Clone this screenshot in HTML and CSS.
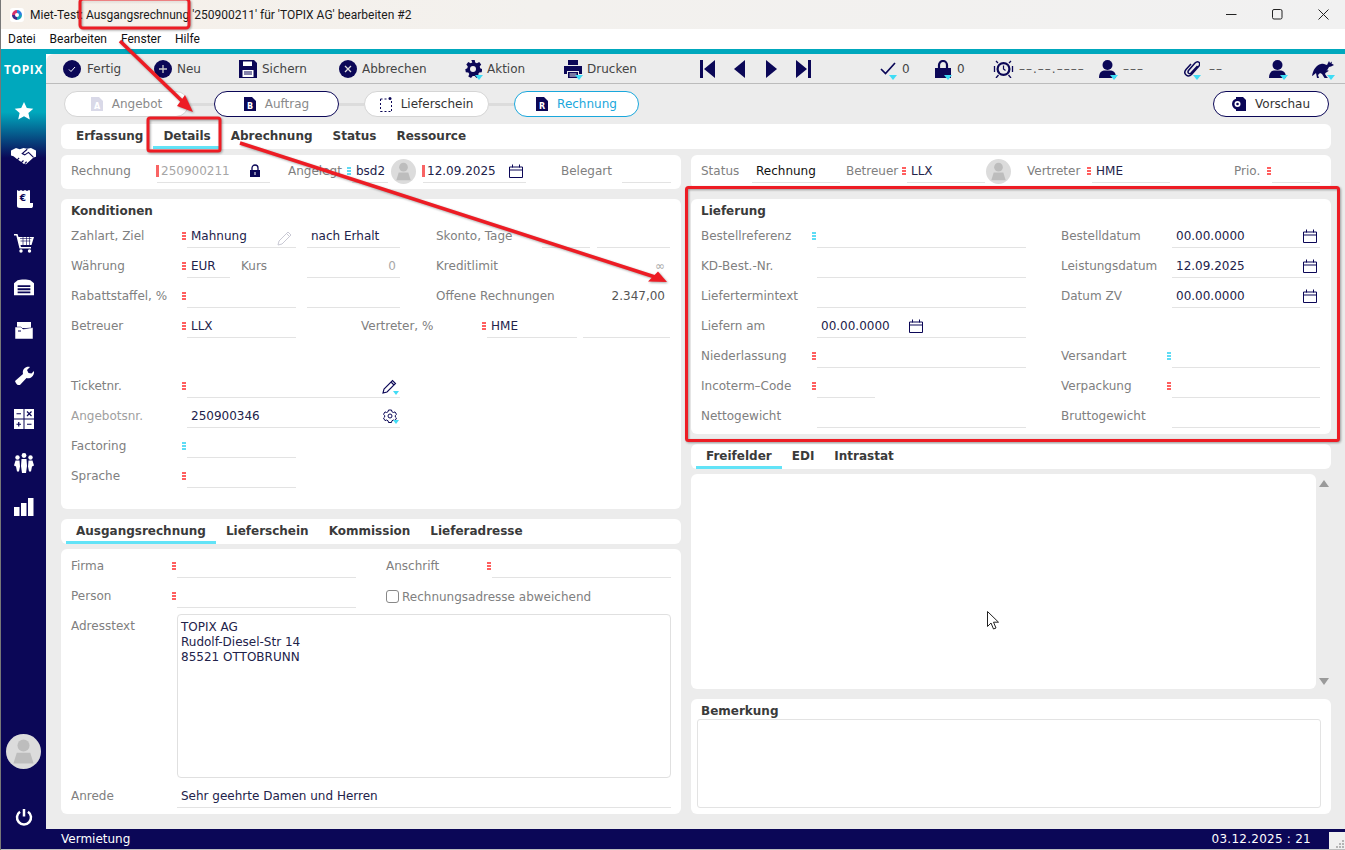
FILE: index.html
```html
<!DOCTYPE html>
<html lang="de">
<head>
<meta charset="utf-8">
<title>TOPIX</title>
<link rel="stylesheet" href="styles.css">
</head>
<body>
<svg class="defs" width="0" height="0">
  <symbol id="i-cal" viewBox="0 0 14 14"><path d="M.5 3h13v10.500H.5zM.5 6h13M3.500.5v3M10.500.500v3" fill="none" stroke="#0b0757"/></symbol>
  <symbol id="i-person" viewBox="0 0 18 18"><circle cx="8.500" cy="5" r="5" fill="#0b0757"/><path d="M0 18c0-5 2-7 5-7.500h7c3 .5 5 2.500 5 7.500z" fill="#0b0757"/></symbol>
  <symbol id="i-avatar" viewBox="0 0 26 26"><circle cx="13" cy="13" r="13" fill="#dcdcdc"/><circle cx="13" cy="8.500" r="4.500" fill="#bdbdbd"/><path d="M8 14h10l2.500 8h-15z" fill="#bdbdbd"/></symbol>
</svg>

<div class="app">
  <header class="title">
    <svg class="t-logo" viewBox="0 0 14 14" width="14" height="14"><rect width="14" height="14" rx="3" fill="#fff"/><path d="M7 2a5 5 0 0 0-5 5h3a2 2 0 0 1 2-2z" fill="#d6336c"/><path d="M7 2a5 5 0 0 1 5 5H9a2 2 0 0 0-2-2z" fill="#2b7de0"/><path d="M12 7a5 5 0 0 1-5 5V9a2 2 0 0 0 2-2z" fill="#17a2b8"/><path d="M7 12a5 5 0 0 1-5-5h3a2 2 0 0 0 2 2z" fill="#3a2b8c"/></svg>
    <span class="t-text">Miet-Test: Ausgangsrechnung '250900211' für 'TOPIX AG' bearbeiten #2</span>
    <div class="winctl">
      <svg width="11" height="11" viewBox="0 0 11 11"><path d="M0 5.500h10.500" stroke="#222"/></svg>
      <svg width="11" height="11" viewBox="0 0 11 11"><rect x=".5" y=".5" width="9.500" height="9.500" rx="1.500" fill="none" stroke="#222"/></svg>
      <svg width="11" height="11" viewBox="0 0 11 11"><path d="M.5.500l10 10M10.500.500l-10 10" stroke="#222"/></svg>
    </div>
  </header>
  <nav class="menu"><span>Datei</span><span>Bearbeiten</span><span>Fenster</span><span>Hilfe</span></nav>
  <div class="teal"></div>

  <div class="body">
    <aside class="side">
      <div class="brand">TOPIX</div>
      <ul class="side-icons">
        <li><svg viewBox="0 0 20 20"><path d="M10 1l2.800 6 6.500.7-4.900 4.400 1.400 6.400L10 15.200 4.200 18.500l1.400-6.400L.7 7.700 7.200 7z" fill="#fff"/></svg></li>
        <li><svg class="wide" viewBox="0 0 20 20"><path d="M0 6l4-2 3 1 3-1 3 .5 3-.5 4 2v5l-2 .5-6 5.500-2-.5-2-1.500-3-2-3-2.500-2-.5z" fill="#fff"/><path d="M13 5L9 8.500l2 1 3-2 4 4M8 16l2-2M11 16.500l1.500-1.500M5 13.500l1.500-1.500" fill="none" stroke="#0b0757" stroke-width=".9"/></svg></li>
        <li><svg viewBox="0 0 20 20"><path d="M3 1l2 1 2-1 2 1 2-1 2 1 2-1 1 .5V14h3v3c0 1.500-1 2-2 2H6c-2 0-3-1-3-2z" fill="#fff"/><text x="9" y="11.500" class="eur">€</text></svg></li>
        <li><svg viewBox="0 0 20 20"><path d="M0 1h3.500l1 3H20l-2.500 8H6.500l.5 2h10v1.500H5.500L2.300 2.500H0z" fill="#fff"/><path d="M6 5.500h11.500M6.500 8h10M9 4v8M12.500 4v8M15.500 4v8" stroke="#0b0757" stroke-width=".6"/><circle cx="7" cy="18" r="1.700" fill="#fff"/><circle cx="15.500" cy="18" r="1.700" fill="#fff"/></svg></li>
        <li><svg viewBox="0 0 22 18"><path d="M0 18V5l4-3.500C7 .5 15 .5 18 1.500L22 5v13z" fill="#fff"/><path d="M4 7h14v2H4zM4 10.500h14v2H4zM4 14h14v2H4z" fill="#0b0757"/></svg></li>
        <li><svg viewBox="0 0 20 20"><path d="M3 1h14v6H3z" fill="#fff"/><path d="M1 6h6l2 2 10-1.500V18H1z" fill="#fff" stroke="#0b0757" stroke-width=".5"/><path d="M4 10h3" stroke="#0b0757"/></svg></li>
        <li><svg viewBox="0 0 20 20"><path d="M1 16l8-7c-1-4 2-8 7-7l-3 3 1.500 3 3 .5 2.500-2.500c.5 5-3.500 8-7.500 7l-7 7.500c-1.500.5-4-2.500-4.500-4.500z" fill="#fff"/></svg></li>
        <li><svg viewBox="0 0 20 20"><path d="M0 0h9.500v9.500H0zM10.500 0H20v9.500h-9.500zM0 10.500h9.500V20H0zM10.500 10.500H20V20h-9.500z" fill="#fff"/><path d="M2.500 4.750h4.500M13 2.500l4.500 4.500M17.500 2.500L13 7M2.500 15.250h4.500M4.750 13v4.500M13 15.250h4.500" stroke="#0b0757" stroke-width="1.200"/></svg></li>
        <li><svg viewBox="0 0 20 20"><circle cx="10" cy="2.500" r="2.400" fill="#fff"/><circle cx="3.500" cy="4.500" r="2.200" fill="#fff"/><circle cx="16.500" cy="4.500" r="2.200" fill="#fff"/><path d="M7.500 6h5l.5 7-1 7H8l-1-7zM1.500 7.500h4l.5 6-1 5H3l-1-5-2-1zM14.500 7.500h4l1.500 5-2 1-1 5h-2l-1-5z" fill="#fff"/></svg></li>
        <li><svg viewBox="0 0 20 20"><path d="M0 10h5.500v9H0zM7 6h5.500v13H7zM14 1h5.500v18H14z" fill="#fff"/></svg></li>
      </ul>
      <div class="side-foot">
        <svg class="side-avatar" width="35" height="35"><use href="#i-avatar"/></svg>
        <svg class="power" viewBox="0 0 18 18" width="18" height="18"><path d="M5 3.800a7 7 0 1 0 8 0" fill="none" stroke="#fff" stroke-width="2.500"/><path d="M9 1v7.500" stroke="#fff" stroke-width="2.500"/></svg>
      </div>
    </aside>

    <main class="main">
      <div class="toolbar">
        <div class="tb w91"><svg class="ico" viewBox="0 0 18 18" width="18" height="18"><circle cx="9" cy="9" r="9" fill="#0b0757"/><path d="M6 9.500l2 2 4-4.500" fill="none" stroke="#fff"/></svg><span class="s6">Fertig</span></div>
        <div class="tb w85"><svg class="ico" viewBox="0 0 18 18" width="18" height="18"><circle cx="9" cy="9" r="9" fill="#0b0757"/><path d="M5 9h8M9 5v8" stroke="#ccc" stroke-width="1.300"/></svg><span class="s5">Neu</span></div>
        <div class="tb w100"><svg class="ico" viewBox="0 0 18 18" width="18" height="18"><path d="M0 0h15l3 3v15H0z" fill="#0b0757"/><path d="M4 1.500h9v4.500H4zM3.500 10h11v7h-11z" fill="#fff"/><path d="M5 12h8M5 14h8" stroke="#0b0757"/></svg><span class="s5">Sichern</span></div>
        <div class="tb w125"><svg class="ico" viewBox="0 0 18 18" width="18" height="18"><circle cx="9" cy="9" r="9" fill="#0b0757"/><path d="M6 6l6 6M12 6l-6 6" stroke="#ddd" stroke-width="1.300"/></svg><span class="s5">Abbrechen</span></div>
        <div class="tb w100"><span class="drop"><svg class="ico" viewBox="0 0 18 18" width="18" height="18"><path d="M7.300 0h3.400l.5 2.500 1.700.8 2.300-1.200 2 2.400-1.500 2 .5 1.700 2 1-.5 3-2.500.3-1 1.600 1 2.300-2.700 1.500-1.800-1.800h-2l-1.700 1.800-2.700-1.500 1-2.300-1-1.600-2.500-.3-.5-3 2-1 .5-1.700-1.500-2 2-2.400 2.300 1.200 1.700-.8z" fill="#0b0757"/><circle cx="9" cy="9" r="3" fill="#ececec"/></svg><i class="tri"></i></span><span class="s5">Aktion</span></div>
        <div class="tb w136"><span class="drop"><svg class="ico" viewBox="0 0 18 18" width="18" height="18"><path d="M4 0h10v5H4zM0 6h18v8h-3v-3H3v3H0zM4 12h10v6H4z" fill="#0b0757"/><path d="M5.500 14h7M5.500 16h7" stroke="#ececec"/></svg><i class="tri"></i></span><span class="s5">Drucken</span></div>
        <div class="tb w34"><svg viewBox="0 0 15 18" width="15" height="18"><path d="M0 0h3v18H0zM15 0v18L4 9z" fill="#0b0757"/></svg></div>
        <div class="tb w32"><svg viewBox="0 0 11 18" width="11" height="18"><path d="M11 0v18L0 9z" fill="#0b0757"/></svg></div>
        <div class="tb w30"><svg viewBox="0 0 11 18" width="11" height="18"><path d="M0 0v18l11-9z" fill="#0b0757"/></svg></div>
        <div class="tb w84"><svg viewBox="0 0 15 18" width="15" height="18"><path d="M12 0h3v18h-3zM0 0v18l11-9z" fill="#0b0757"/></svg></div>
        <div class="tb w55"><span class="drop"><svg viewBox="0 0 16 18" width="16" height="18"><path d="M1 9l4.500 4.500L15 3" fill="none" stroke="#0b0757" stroke-width="1.700"/></svg><i class="tri"></i></span><span class="s6">0</span></div>
        <div class="tb w58"><span class="drop"><svg viewBox="0 0 16 18" width="16" height="18"><path d="M4 8V5a4 4 0 0 1 8 0v3" fill="none" stroke="#0b0757" stroke-width="2.200"/><path d="M0 8h16v10H0z" fill="#0b0757"/></svg><i class="tri"></i></span><span class="s6">0</span></div>
        <div class="tb w106"><svg viewBox="0 0 21 18" width="21" height="18"><circle cx="10.500" cy="9" r="7" fill="#0b0757"/><circle cx="10.500" cy="9" r="4.800" fill="#ececec"/><path d="M10.500 5.500V9l2 1.500" fill="none" stroke="#0b0757" stroke-width="1.200"/><path d="M5 3L3 1M16 3l2-2M5.500 15L3 18M15.500 15l2.500 3M1.500 6v6M19.500 6v6" stroke="#0b0757" stroke-width="1.300"/></svg><span class="s5 dim">––.––.––––</span></div>
        <div class="tb w85"><span class="drop"><svg width="18" height="18"><use href="#i-person"/></svg><i class="tri"></i></span><span class="s6 dim">–––</span></div>
        <div class="tb w85"><span class="drop"><svg viewBox="0 0 16 18" width="16" height="18"><path d="M13.500 6L7 13c-1.500 1.500-4 0-2.500-2.500L11 3c3-3 6 0 4 3l-7.500 8.500C4 18 -1.500 14 2 9.500L7 4" fill="none" stroke="#0b0757" stroke-width="1.500"/></svg><i class="tri"></i></span><span class="s7 dim">––</span></div>
        <div class="tb w43"><span class="drop"><svg width="18" height="18"><use href="#i-person"/></svg><i class="tri"></i></span></div>
        <div class="tb"><span class="drop"><svg viewBox="0 0 22 18" width="22" height="18"><path d="M0 16C1 10 4 5 9 4c3-1 5 1 6 1l2-4 1 2 2-1.500-.5 2L22 5l-3 1.500-2 .5c-1 2-2 3-2.500 4l1.500-1 .5 1-3 2-.5 1 2 3 1 1h-3.500L10 14l-2-1-2 2 1 3H5l-1-5-3 2.500z" fill="#0b0757"/></svg><i class="tri"></i></span></div>
      </div>

      <div class="pipeline">
        <div class="pill"><svg class="doc" viewBox="0 0 12 14" width="12" height="14"><path d="M0 0h8l4 4v10H0z" fill="#d9d9e8"/><text x="6" y="12" class="doc-l light">A</text></svg><span class="p-dim">Angebot</span></div>
        <i class="conn"></i>
        <div class="pill navy"><svg class="doc" viewBox="0 0 12 14" width="12" height="14"><path d="M0 0h8l4 4v10H0z" fill="#0b0757"/><text x="6" y="12" class="doc-l">B</text></svg><span class="p-dim">Auftrag</span></div>
        <i class="conn"></i>
        <div class="pill"><svg class="doc" viewBox="0 0 12 15" width="12" height="15"><path d="M.5 2h7M.5 14.500h11M.5 2v12.500M11.500 4v10.500" fill="none" stroke="#0b0757" stroke-dasharray="2 2"/><circle cx="10" cy="1.500" r="1.500" fill="#0b0757"/></svg><span>Lieferschein</span></div>
        <i class="conn"></i>
        <div class="pill blue"><svg class="doc" viewBox="0 0 12 14" width="12" height="14"><path d="M0 0h8l4 4v10H0z" fill="#0b0757"/><text x="6" y="12" class="doc-l">R</text></svg><span>Rechnung</span></div>
        <div class="pill navy preview"><svg class="doc" viewBox="0 0 14 14" width="14" height="14"><path d="M4 0h7l3 3v11H4z" fill="#0b0757"/><circle cx="5.500" cy="7" r="5.500" fill="#0b0757"/><circle cx="5.500" cy="7" r="3" fill="#fff"/><circle cx="5.500" cy="7" r="1.300" fill="#0b0757"/></svg><span>Vorschau</span></div>
      </div>

      <div class="tabs top">
        <span class="tab">Erfassung</span><span class="tab on">Details</span><span class="tab">Abrechnung</span><span class="tab">Status</span><span class="tab">Ressource</span>
      </div>

      <div class="cols">
        <div class="col">
          <section class="panel head">
            <div class="row">
              <label class="lbl w85">Rechnung</label><i class="bar"></i><div class="fld w113 gray">250900211<svg class="f-ico lock" viewBox="0 0 12 13" width="12" height="13"><path d="M3 6V4a3 3 0 0 1 6 0v2" fill="none" stroke="#0b0757" stroke-width="1.300"/><path d="M1 6h10v7H1z" fill="#0b0757"/><path d="M6 8v3" stroke="#fff"/></svg></div>
              <label class="lbl w59 ml18">Angelegt</label><i class="mk blue"></i><div class="fld w36">bsd2</div>
              <svg class="hd-av" width="25" height="25"><use href="#i-avatar"/></svg><i class="bar b2"></i><div class="fld w103">12.09.2025<svg class="f-ico" width="14" height="14"><use href="#i-cal"/></svg></div>
              <label class="lbl w61 ml35">Belegart</label><div class="fld w49"></div>
            </div>
          </section>

          <section class="panel kond">
            <h2 class="ptitle">Konditionen</h2>
            <div class="row"><label class="lbl w111">Zahlart, Ziel</label><i class="mk red"></i><div class="fld w109">Mahnung<svg class="f-ico faint" viewBox="0 0 16 16" width="16" height="16"><path d="M1 15l1-4L11 2l3 3-9 9zM9.500 3.500l3 3" fill="none" stroke="#c9c9d4"/></svg></div><div class="fld w93 ml11">nach Erhalt</div><label class="lbl w106 ml36">Skonto, Tage</label><div class="fld w48"></div><div class="fld w73 ml7"></div></div>
            <div class="row"><label class="lbl w111">Währung</label><i class="mk red"></i><div class="fld w43">EUR</div><label class="lbl w66 ml11">Kurs</label><div class="fld w93 num faint-t">0</div><label class="lbl w234 ml36 nb"><span>Kreditlimit</span><span class="val-r faint-t">∞</span></label></div>
            <div class="row"><label class="lbl w111">Rabattstaffel, %</label><i class="mk red"></i><div class="fld w109"></div><div class="fld w93 ml11"></div><label class="lbl w234 ml36 nb"><span>Offene Rechnungen</span><span class="val-r">2.347,00</span></label></div>
            <div class="row"><label class="lbl w111">Betreuer</label><i class="mk red"></i><div class="fld w109"><span>LLX</span></div><label class="lbl w121 ml65">Vertreter, %</label><i class="mk red"></i><div class="fld w90">HME</div><div class="fld w87 ml6"></div></div>
            <div class="row"></div>
            <div class="row"><label class="lbl w111">Ticketnr.</label><i class="mk red"></i><div class="fld w213"><span class="drop f-ico dark"><svg viewBox="0 0 15 15" width="15" height="15"><path d="M1 14l1-4L10.500 1.500l3 3L5 13zM9 3l3 3" fill="none" stroke="#0b0757" stroke-width="1.100"/></svg><i class="tri sm"></i></span></div></div>
            <div class="row"><label class="lbl w111 lite">Angebotsnr.</label><i class="mk"></i><div class="fld w213">250900346<span class="drop f-ico dark"><svg viewBox="0 0 14 14" width="14" height="14"><path d="M5.500 1h3l.4 1.700 1.500.8 1.600-.6 1.500 2.500-1.200 1.100v1.500l1.200 1.100-1.500 2.500-1.600-.6-1.500.8-.4 1.700h-3l-.4-1.700-1.500-.8-1.600.6L.5 9.100l1.200-1.100V6.500L.5 5.400 2 2.900l1.600.6 1.500-.8z" fill="none" stroke="#0b0757"/><circle cx="7" cy="7" r="2" fill="none" stroke="#0b0757"/></svg><i class="tri sm"></i></span></div></div>
            <div class="row"><label class="lbl w111">Factoring</label><i class="mk blue"></i><div class="fld w109"></div></div>
            <div class="row"><label class="lbl w111">Sprache</label><i class="mk red"></i><div class="fld w109"></div></div>
          </section>

          <div class="tabs">
            <span class="tab on">Ausgangsrechnung</span><span class="tab">Lieferschein</span><span class="tab">Kommission</span><span class="tab">Lieferadresse</span>
          </div>

          <section class="panel addr">
            <div class="row first"><label class="lbl w101">Firma</label><i class="mk red"></i><div class="fld w179"></div><label class="lbl w101 ml30">Anschrift</label><i class="mk red"></i><div class="fld w179"></div></div>
            <div class="row"><label class="lbl w101">Person</label><i class="mk red"></i><div class="fld w179"></div><div class="check ml30"><i class="box"></i><span>Rechnungsadresse abweichend</span></div></div>
            <div class="row area"><label class="lbl w106">Adresstext</label><div class="txt">TOPIX AG<br>Rudolf-Diesel-Str 14<br>85521 OTTOBRUNN</div></div>
            <div class="row"><label class="lbl w106">Anrede</label><div class="fld w494">Sehr geehrte Damen und Herren</div></div>
          </section>
        </div>

        <div class="col">
          <section class="panel head">
            <div class="row">
              <label class="lbl w51">Status</label><div class="fld w88 black">Rechnung</div>
              <label class="lbl w56 ml6">Betreuer</label><i class="mk red"></i><div class="fld w78">LLX</div>
              <svg class="hd-av a2" width="25" height="25"><use href="#i-avatar"/></svg>
              <label class="lbl w60 ml16">Vertreter</label><i class="mk red"></i><div class="fld w78">HME</div>
              <label class="lbl w33 ml64">Prio.</label><i class="mk red"></i><div class="fld w48"></div>
            </div>
          </section>

          <section class="panel lief">
            <h2 class="ptitle">Lieferung</h2>
            <div class="row"><label class="lbl w111">Bestellreferenz</label><i class="mk blue"></i><div class="fld w209"></div><label class="lbl w111 ml35">Bestelldatum</label><div class="fld w148">00.00.0000<svg class="f-ico" width="14" height="14"><use href="#i-cal"/></svg></div></div>
            <div class="row"><label class="lbl w111">KD-Best.-Nr.</label><i class="mk"></i><div class="fld w209"></div><label class="lbl w111 ml35">Leistungsdatum</label><div class="fld w148">12.09.2025<svg class="f-ico" width="14" height="14"><use href="#i-cal"/></svg></div></div>
            <div class="row"><label class="lbl w111">Liefertermintext</label><i class="mk"></i><div class="fld w209"></div><label class="lbl w111 ml35">Datum ZV</label><div class="fld w148">00.00.0000<svg class="f-ico" width="14" height="14"><use href="#i-cal"/></svg></div></div>
            <div class="row"><label class="lbl w111">Liefern am</label><i class="mk"></i><div class="fld w209">00.00.0000<svg class="f-ico inl" width="14" height="14"><use href="#i-cal"/></svg></div></div>
            <div class="row"><label class="lbl w111">Niederlassung</label><i class="mk red"></i><div class="fld w209"></div><label class="lbl w106 ml35">Versandart</label><i class="mk blue"></i><div class="fld w148"></div></div>
            <div class="row"><label class="lbl w111">Incoterm–Code</label><i class="mk red"></i><div class="fld w58"></div><label class="lbl w106 ml186">Verpackung</label><i class="mk red"></i><div class="fld w148"></div></div>
            <div class="row"><label class="lbl w111">Nettogewicht</label><i class="mk"></i><div class="fld w209"></div><label class="lbl w111 ml35">Bruttogewicht</label><div class="fld w148"></div></div>
          </section>

          <div class="tabs">
            <span class="tab on">Freifelder</span><span class="tab">EDI</span><span class="tab">Intrastat</span>
          </div>

          <div class="free">
            <div class="panel free-box"></div>
            <div class="scroll"><i class="arr up"></i><i class="arr down"></i></div>
          </div>

          <section class="panel bem">
            <h2 class="ptitle">Bemerkung</h2>
            <div class="bem-box"></div>
          </section>
        </div>
      </div>
    </main>
  </div>

  <footer class="status">
    <span class="st-l">Vermietung</span>
    <span class="st-r">03.12.2025 : 21</span>
    <i class="grip"></i>
  </footer>
</div>

<svg class="notes" width="1345" height="850" viewBox="0 0 1345 850">
  <g fill="none" stroke="#ed1c24" stroke-width="3">
    <rect x="80" y="-1" width="109" height="29" rx="3"/>
    <rect x="148" y="118" width="72" height="33" rx="2"/>
    <rect x="686.500" y="187.500" width="652" height="253" rx="2"/>
    <path d="M120 41l63 61M240 143l415 134" stroke-width="3.500"/>
  </g>
  <g fill="#ed1c24">
    <path d="M193 112l-16-6 8-11z"/>
    <path d="M667 282l-19-.5 10-10z"/>
  </g>
</svg>

<svg class="cursor" width="13" height="19" viewBox="0 0 13 19"><path d="M.5.500v15l3.500-3.500 2.500 6 2.500-1-2.500-5.800h5z" fill="#fff" stroke="#222"/></svg>
</body>
</html>
```

FILE: styles.css
```css
* { box-sizing: border-box; }
html, body { margin: 0; padding: 0; }
body {
  width: 1345px; height: 850px; overflow: hidden; position: relative;
  font-family: "DejaVu Sans", sans-serif; font-size: 12px; color: #22224a; background: #fff;
}
.defs { position: absolute; }
.app { width: 1345px; height: 850px; display: flex; flex-direction: column; border-left: 1px solid #777; }

/* window chrome */
.title { height: 29px; display: flex; align-items: center; padding-left: 9px; background: linear-gradient(90deg, #f6f0e9 0, #f3f1ee 40%, #f1f1f1 100%); font-family: Roboto, sans-serif; font-size: 12px; color: #1a1a1a; flex: none; }
.t-logo { margin-right: 6px; }
.winctl { margin-left: auto; display: flex; gap: 35px; padding-right: 16px; }
.menu { height: 20px; background: #fff; display: flex; align-items: center; padding-left: 7px; font-family: Roboto, sans-serif; font-size: 12px; color: #111; gap: 14px; flex: none; }
.teal { height: 5px; background: #00a8bd; flex: none; }

.body { height: 775px; display: flex; flex: none; }

/* sidebar */
.side { width: 45px; flex: none; display: flex; flex-direction: column; background: linear-gradient(180deg, #00a8bd 0, #00a8bd 58px, #0b0757 104px); }
.brand { height: 35px; font-family: "Open Sans", sans-serif; font-weight: 700; font-size: 12px; letter-spacing: .6px; color: #fff; text-align: center; line-height: 31px; margin-bottom: 0; }
.side-icons { list-style: none; margin: 0; padding: 0; }
.side-icons li { height: 44px; display: flex; align-items: center; justify-content: center; }
.side-icons svg { width: 20px; height: 20px; }
.side-icons svg.wide { width: 25px; height: 25px; }
.eur { font-size: 9px; font-weight: 700; fill: #0b0757; text-anchor: middle; }
.side-foot { margin-top: auto; display: flex; flex-direction: column; align-items: center; padding-bottom: 3px; gap: 39px; }
.side-avatar { display: block; }
.power { display: block; }

/* main */
.main { flex: 1; background: #ececec; border-top-left-radius: 8px; display: flex; flex-direction: column; }
.toolbar { height: 30px; flex: none; display: flex; align-items: center; padding-left: 17px; border-bottom: 1px solid #bcbcbc; color: #444; }
.tb { display: flex; align-items: center; flex: none; }
.ico { display: block; }
.s5 { margin-left: 5px; }
.s6 { margin-left: 6px; }
.s7 { margin-left: 9px; }
.dim { color: #555; letter-spacing: 1px; }
.drop { position: relative; display: inline-block; }
.drop svg { display: block; }
.tri { position: absolute; right: -1px; bottom: -2px; width: 0; height: 0; border-left: 4px solid transparent; border-right: 4px solid transparent; border-top: 5px solid #3fdcf5; }
.tri.sm { right: -2px; bottom: -1px; border-left-width: 3px; border-right-width: 3px; border-top-width: 4px; }

.w30 { width: 30px; } .w32 { width: 32px; } .w33 { width: 33px; } .w34 { width: 34px; } .w36 { width: 36px; }
.w43 { width: 43px; } .w48 { width: 48px; } .w49 { width: 49px; } .w51 { width: 51px; } .w55 { width: 55px; }
.w56 { width: 56px; } .w58 { width: 58px; } .w59 { width: 59px; } .w60 { width: 60px; } .w61 { width: 61px; }
.w66 { width: 66px; } .w73 { width: 73px; } .w78 { width: 78px; } .w84 { width: 84px; } .w85 { width: 85px; }
.w87 { width: 87px; } .w88 { width: 88px; } .w90 { width: 90px; } .w91 { width: 91px; } .w93 { width: 93px; }
.w100 { width: 100px; } .w101 { width: 101px; } .w103 { width: 103px; } .w106 { width: 106px; } .w109 { width: 109px; }
.w111 { width: 111px; } .w113 { width: 113px; } .w121 { width: 121px; } .w125 { width: 125px; } .w136 { width: 136px; }
.w148 { width: 148px; } .w179 { width: 179px; } .w209 { width: 209px; } .w213 { width: 213px; } .w234 { width: 234px; } .w494 { width: 494px; }
.ml6 { margin-left: 6px; } .ml7 { margin-left: 7px; } .ml11 { margin-left: 11px; } .ml16 { margin-left: 16px; } .ml18 { margin-left: 18px; }
.ml30 { margin-left: 30px; } .ml35 { margin-left: 35px; } .ml36 { margin-left: 36px; } .ml64 { margin-left: 64px; } .ml65 { margin-left: 65px; } .ml186 { margin-left: 186px; }

/* pipeline */
.pipeline { height: 40px; flex: none; display: flex; align-items: flex-start; padding: 7px 16px 0 18px; }
.pill { width: 125px; height: 26px; flex: none; display: flex; align-items: center; justify-content: center; gap: 9px; background: #fff; border: 1px solid #d5d5d5; border-radius: 13px; color: #333; }
.pill.navy { border-color: #0b0757; }
.pill.blue { border-color: #1aa7dc; color: #1aa7dc; }
.p-dim { color: #8a8a8a; }
.conn { width: 25px; height: 3px; margin-top: 12px; background: #dcdcdc; flex: none; }
.doc { display: block; flex: none; }
.doc-l { font-size: 8px; font-weight: 700; fill: #fff; text-anchor: middle; }
.doc-l.light { fill: #fff; }
.preview { width: 116px; margin-left: auto; color: #333; }

/* tabs */
.tabs { height: 25px; flex: none; background: #fff; border-radius: 6px; display: flex; padding-left: 5px; font-weight: 700; font-size: 12px; color: #3a3a3a; }
.tabs.top { margin: 0 14px 0 15px; }
.tab { padding: 0 10px; line-height: 24px; height: 25px; }
.tab.on { border-bottom: 3px solid #62e3f7; }

.cols { display: flex; gap: 10px; padding: 6px 14px 0 15px; }
.col { width: 620px; display: flex; flex-direction: column; }
.col + .col { width: 640px; }

.panel { background: #fff; border-radius: 6px; flex: none; }
.head { height: 34px; margin-bottom: 10px; padding-left: 10px; }
.kond { height: 310px; margin-bottom: 10px; padding-left: 10px; }
.lief { height: 235px; margin-bottom: 10px; padding-left: 10px; }
.addr { height: 265px; margin-top: 5px; padding-left: 10px; }
.ptitle { margin: 0; height: 19px; padding-top: 4px; line-height: 16px; font-size: 12px; font-weight: 700; color: #3a3a3a; }

.row { height: 30px; display: flex; align-items: flex-end; }
.head .row { height: 28px; }
.first { height: 29px; }
.lbl { flex: none; height: 23px; line-height: 22px; color: #808080; white-space: nowrap; }
.lite { color: #a0a0a0; }
.nb { display: flex; justify-content: space-between; padding-right: 5px; }
.val-r { color: #555; }
.faint-t { color: #a8a8a8; }
.fld { flex: none; position: relative; height: 23px; line-height: 22px; border-bottom: 1px solid #e3e3e3; padding-left: 4px; white-space: nowrap; }
.num { text-align: right; padding-right: 4px; }
.gray { color: #a6a6a6; }
.black { color: #111; }
.f-ico { position: absolute; right: 3px; top: 4px; }
.f-ico.lock { right: 9px; }
.f-ico.faint { right: 3px; top: 5px; }
.f-ico.dark { right: 3px; }
.f-ico.inl { left: 92px; right: auto; }
.kond .f-ico { right: 3px; }

.mk { flex: none; width: 5px; height: 23px; position: relative; }
.mk.red::before, .mk.blue::before { content: ""; position: absolute; left: 0; top: 7px; width: 4px; height: 8px; background: repeating-linear-gradient(180deg, var(--mk) 0 2px, transparent 2px 3px); }
.mk.red { --mk: #ff5f5f; }
.mk.blue { --mk: #5fdcf5; }
.bar { flex: none; width: 3px; height: 12px; margin: 0 -2px 6px 0; background: #f96464; }
.b2 { margin-left: 6px; margin-right: -2px; }
.hd-av { flex: none; margin: 0 0 -1px 3px; }
.a2 { margin-left: 1px; }

.check { display: flex; align-items: center; height: 23px; color: #808080; gap: 3px; }
.box { width: 13px; height: 13px; border: 1px solid #888; border-radius: 3px; background: #fff; }
.area { height: auto; margin-top: 6px; align-items: flex-start; }
.area .lbl { margin-top: 1px; }
.txt { width: 494px; height: 164px; border: 1px solid #e0e0e0; border-radius: 4px; padding: 5px 3px; line-height: 15px; font-size: 12px; }

.free { display: flex; margin-top: 5px; height: 215px; flex: none; }
.free-box { width: 625px; }
.scroll { flex: 1; position: relative; display: flex; flex-direction: column; justify-content: space-between; align-items: center; padding: 6px 0 4px; }
.arr { width: 0; height: 0; border-left: 5px solid transparent; border-right: 5px solid transparent; }
.up { border-bottom: 7px solid #9a9a9a; }
.down { border-top: 7px solid #9a9a9a; }

.bem { height: 115px; margin-top: 10px; padding-left: 10px; position: relative; }
.bem-box { position: absolute; left: 6px; top: 20px; width: 624px; height: 89px; border: 1px solid #e3e3e3; border-radius: 3px; }

/* status bar */
.status { height: 20px; flex: none; background: #0b0757; color: #fff; display: flex; align-items: center; padding-left: 60px; position: relative; }
.st-r { margin-left: auto; margin-right: 34px; letter-spacing: .25px; }
.grip { position: absolute; right: 0; bottom: 0; width: 16px; height: 17px; background: radial-gradient(circle at 1px 1px, #b5b5b5 1px, transparent 1.2px) right bottom / 3px 3px no-repeat, radial-gradient(circle at 1px 1px, #b5b5b5 1px, transparent 1.2px) right 3px bottom / 3px 3px no-repeat, radial-gradient(circle at 1px 1px, #b5b5b5 1px, transparent 1.2px) right 6px bottom / 3px 3px no-repeat, radial-gradient(circle at 1px 1px, #b5b5b5 1px, transparent 1.2px) right bottom 3px / 3px 3px no-repeat, radial-gradient(circle at 1px 1px, #b5b5b5 1px, transparent 1.2px) right 3px bottom 3px / 3px 3px no-repeat, radial-gradient(circle at 1px 1px, #b5b5b5 1px, transparent 1.2px) right bottom 6px / 3px 3px no-repeat, #f0f0f0; }
.app::after { content: ""; height: 1px; background: #bdbdbd; flex: none; }

/* annotations drawn over the page */
.notes { position: absolute; left: 0; top: 0; pointer-events: none; filter: drop-shadow(1px 1px 1px rgba(0,0,0,.35)); }
.cursor { position: absolute; left: 987px; top: 611px; }
```
